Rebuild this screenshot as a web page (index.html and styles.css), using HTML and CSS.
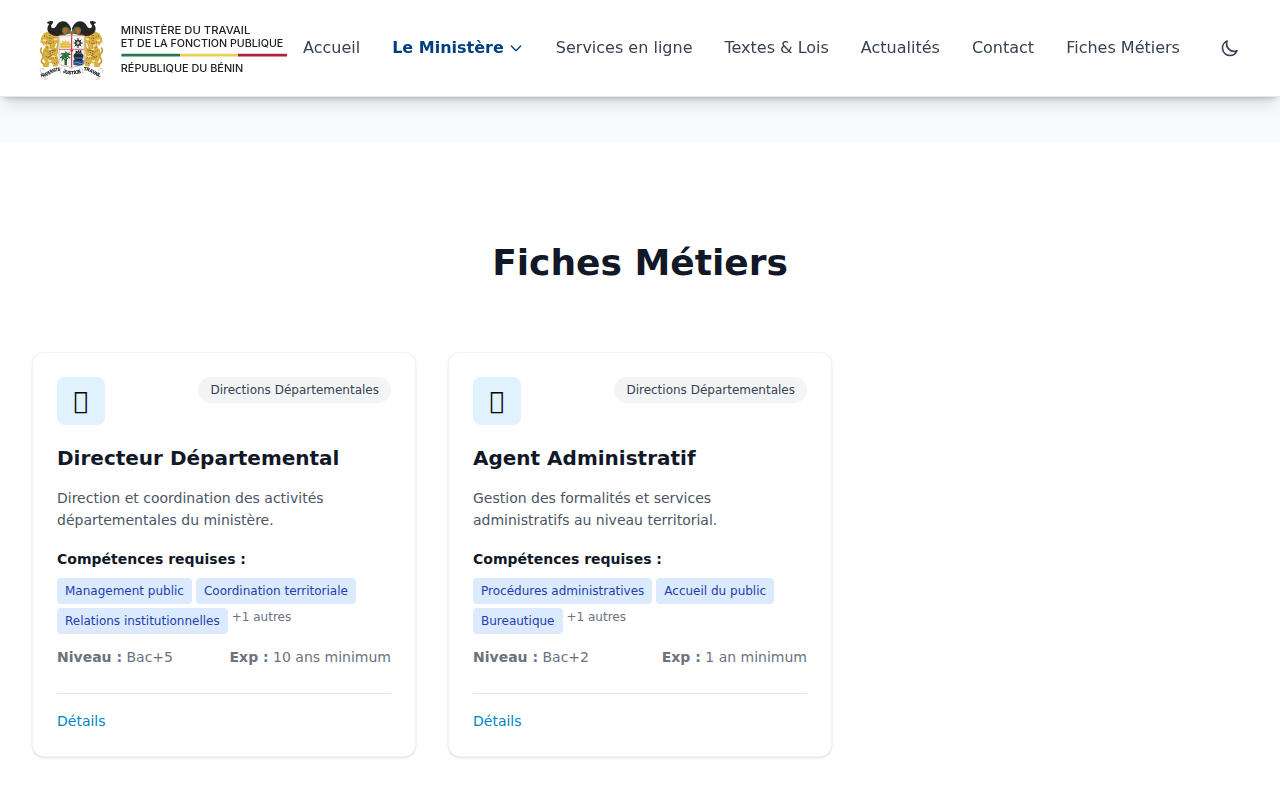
FILE: index.html
```html
<!DOCTYPE html>
<html lang="fr">
<head>
<meta charset="utf-8">
<title>Fiches Métiers</title>
<link rel="stylesheet" href="styles.css">
</head>
<body>
<header class="header">
  <a class="brand" href="#">
    <svg class="crest" viewBox="0 0 270 240" width="90" height="80" aria-hidden="true">
      <g id="lion">
        <path fill="#d9b044" d="M42 70l10-5 12 3 14 2 7 9 2 12-2 26-3 20 5 18-4 13-13 2-5-12-7 2-2 11-15 1-4-8 9-6-7-15-1-17 5-17-9-12-3 2 2-15z"/>
        <path fill="none" stroke="#c79b38" stroke-width="5" stroke-linecap="round" d="M42 162q-12-5-6-15 7-9 0-17-7-6-2-16"/>
        <path fill="none" stroke="#9a7129" stroke-width="3" d="M48 110l14 12 16-2M52 143l17-9 10 12"/>
        <path fill="none" stroke="#6d5422" stroke-width="3" stroke-dasharray="3 5" d="M42 77l18 9 13-3M48 95l13 7 12-7M46 121l14 9 15-6M48 139l15 8 13-5M72 162l9-5M60 75v60"/>
        <path stroke="#f6e5a8" stroke-width="5" d="M38 91h11M72 89l10-2M55 116l9 3M66 137l10 4M52 104l8 6M54 152l9 2"/>
        <path stroke="#fff" stroke-width="4" d="M46 103l-3 12M80 100l-4 14M60 160l9 6"/>
        <path stroke="#b83e36" stroke-width="4" d="M66 72l8 5"/>
      </g>
      <use href="#lion" transform="matrix(-1 0 0 1 249 0)"/>
      <path id="horn" fill="#262524" d="M50 38q8-7 18-4 4 3-1 7-6 5-3 11 4 6 12 0 5-11 13-16 11-5 21 1 9 7 13 18l-2 14q-10 6-22 5-8 6-24 3-18-4-22-15-3-12 5-20-5-1-8-4z"/>
      <use href="#horn" transform="matrix(-1 0 0 1 249 0)"/>
      <path fill="#5c7437" d="M98 54q10-8 20 1l4 16-21 1q-9-7-3-18zM151 54q-10-8-20 1l-4 16 21 1q9-7 3-18z"/>
      <path fill="#b8682f" d="M96 63l10-9 8 6-10 13zM153 63l-10-9-8 6 10 13z"/>
      <path fill="#bf3b30" d="M122 64h6v14h-6zM91 73h14v4H91zM145 73h15v4h-15z"/>
      <path fill="#f7f5ee" stroke="#a8a6a0" stroke-width="2" d="M87 77h76v83q-2 7-16 8-15 0-22 8-7-8-23-8-13-1-15-8z"/>
      <path fill="#e2b33d" d="M91 113V97l5 4 1-9 7 5 3-7 4 7 6-4 2 9 3-2v13z"/>
      <path fill="none" stroke="#f0d778" stroke-width="3" d="M94 106h26M98 99h18"/>
      <circle cx="144" cy="99" r="7" fill="#c6c1b4" stroke="#242629" stroke-width="4"/>
      <path stroke="#242629" stroke-width="3" d="M144 84v7M144 107v7M131 99h7M150 99h8M134 89l5 5M154 89l-5 5M134 109l5-5M154 109l-5-5"/>
      <path fill="#3e7a4d" d="M103 165l3-23-12 13 2-13-7 4 9-13-8-3 14-1 2-6 7 6 7-3-2 6 6 1-9 2 6 11-10-6 0 26z"/>
      <path fill="none" stroke="#285b39" stroke-width="3" d="M90 143q14-9 17 22 1-26 14-22M92 133q13-8 15 10 4-13 15-9"/>
      <path fill="#244e96" d="M130 150h31v13q-7 4-16 4l-15-3z"/>
      <path fill="#1e2937" d="M131 134l6-6v-6h4v5l4-8 4 8v-6h5v8l6 5v9l-5 9h-20l-4-10z"/>
      <path fill="none" stroke="#9baec7" stroke-width="2" d="M133 144h26M139 131l7-2 8 3M133 159q8-5 14 0t13-1"/>
      <path stroke="#b82e35" stroke-width="3" d="M125 78v94"/>
      <path fill="none" stroke="#b82e35" stroke-width="2" d="M87 118h76"/>
      <circle cx="125" cy="122" r="4" fill="#cf3037"/>
      <path fill="#fff" d="M32 190q17-2 30-11 15-10 27-8v12q-14 0-28 9-13 8-28 10zM94 174q30 13 62 0l3 13q-35 15-67 0zM163 171q15-2 28 8 13 9 28 11l-2 12q-15-2-28-10-13-9-27-9z"/>
      <g fill="none" stroke="#b5b1a8" stroke-width="2">
        <path d="M34 190q-8-10 0-15 8-2 9 8M48 204q-6-5-7 2 5 5 12-1M92 190q-5-14 5-17M157 190q5-14-5-17M215 190q8-10 0-15-8-2-9 8M201 204q6-5 7 2-5 5-12-1"/>
      </g>
      <defs>
        <path id="m1" d="M34 202q16-3 29-12 13-8 29-7"/>
        <path id="m2" d="M98 187q28 11 58 0"/>
        <path id="m3" d="M161 181q16 1 27 9 13 9 29 12"/>
      </defs>
      <g class="motto">
        <text><textPath href="#m1" textLength="60" lengthAdjust="spacingAndGlyphs">FRATERNITE</textPath></text>
        <text><textPath href="#m2" textLength="57" lengthAdjust="spacingAndGlyphs">JUSTICE</textPath></text>
        <text><textPath href="#m3" textLength="54" lengthAdjust="spacingAndGlyphs">TRAVAIL</textPath></text>
      </g>
    </svg>
    <svg class="wordmark" viewBox="120 10 170 80" width="170" height="80">
      <text x="120.8" y="34" textLength="129.5" lengthAdjust="spacingAndGlyphs">MINISTÈRE DU TRAVAIL</text>
      <text x="120.8" y="46.6" textLength="162.5" lengthAdjust="spacingAndGlyphs">ET DE LA FONCTION PUBLIQUE</text>
      <path fill="#26764e" d="M121.4 53.8H180v2.8h-58.6z"/>
      <path fill="#ebce54" d="M180 53.8h58v2.8h-58z"/>
      <path fill="#ab2437" d="M238 53.8h49v2.8h-49z"/>
      <text x="120.8" y="72.2" textLength="122.5" lengthAdjust="spacingAndGlyphs">RÉPUBLIQUE DU BÉNIN</text>
    </svg>
  </a>
  <nav class="nav">
    <a href="#">Accueil</a>
    <a class="active" href="#">Le Ministère
      <svg width="16" height="16" viewBox="0 0 24 24" fill="none" stroke="currentColor" stroke-width="2" stroke-linecap="round" stroke-linejoin="round"><path d="M19 9l-7 7-7-7"/></svg>
    </a>
    <a href="#">Services en ligne</a>
    <a href="#">Textes &amp; Lois</a>
    <a href="#">Actualités</a>
    <a href="#">Contact</a>
    <a href="#">Fiches Métiers</a>
  </nav>
  <button class="theme" aria-label="Mode sombre">
    <svg width="20" height="20" viewBox="0 0 24 24" fill="none" stroke="currentColor" stroke-width="2" stroke-linecap="round" stroke-linejoin="round"><path d="M20.354 15.354A9 9 0 018.646 3.646 9.003 9.003 0 0012 21a9.003 9.003 0 008.354-5.646z"/></svg>
  </button>
</header>
<div class="band"></div>
<main class="main">
  <h1>Fiches Métiers</h1>
  <div class="grid">
    <article class="card">
      <div class="top"><div class="icon">&#xF0B1;</div><span class="badge">Directions Départementales</span></div>
      <h2>Directeur Départemental</h2>
      <p class="desc">Direction et coordination des activités départementales du ministère.</p>
      <h3>Compétences requises :</h3>
      <div class="tags"><span class="tag">Management public</span><span class="tag">Coordination territoriale</span><span class="tag">Relations institutionnelles</span><span class="more">+1 autres</span></div>
      <div class="facts"><span><b>Niveau :</b> Bac+5</span><span><b>Exp :</b> 10 ans minimum</span></div>
      <div class="foot"><a href="#">Détails</a></div>
    </article>
    <article class="card">
      <div class="top"><div class="icon">&#xF0B1;</div><span class="badge">Directions Départementales</span></div>
      <h2>Agent Administratif</h2>
      <p class="desc">Gestion des formalités et services administratifs au niveau territorial.</p>
      <h3>Compétences requises :</h3>
      <div class="tags"><span class="tag">Procédures administratives</span><span class="tag">Accueil du public</span><span class="tag">Bureautique</span><span class="more">+1 autres</span></div>
      <div class="facts"><span><b>Niveau :</b> Bac+2</span><span><b>Exp :</b> 1 an minimum</span></div>
      <div class="foot"><a href="#">Détails</a></div>
    </article>
  </div>
</main>
</body>
</html>
```
FILE: styles.css
```css
* { box-sizing: border-box; margin: 0; padding: 0; }
html, body { height: 100%; overflow: hidden; }
body { font-family: "DejaVu Sans", sans-serif; font-size: 16px; line-height: 24px; color: #111827; background: #fff; }
a { color: inherit; text-decoration: none; }

.header {
  position: relative; z-index: 2; display: flex; align-items: center;
  height: 97px; padding: 0 40px 0 30px; background: #fff;
  border-bottom: 1px solid #e5e7eb; will-change: transform;
  box-shadow: 0 4px 6px -4px rgba(0,0,0,.3), 0 10px 15px -3px rgba(0,0,0,.13);
}
.brand { display: flex; width: 273px; padding-top: 4px; }
.crest, .wordmark { display: block; flex: none; }
.wordmark text { font: 500 9.8px "Inter", sans-serif; fill: #202020; }
.motto text { font: bold 14px "Liberation Sans", sans-serif; fill: #111; stroke: #111; stroke-width: .6px; }
.nav { display: flex; gap: 32px; color: #374151; white-space: nowrap; }
.nav a { display: flex; align-items: center; }
.nav .active { color: #003f7f; font-weight: 700; gap: 4px; }
.theme { margin-left: auto; display: flex; border: 0; background: none; color: #374151; }

.band { height: 45px; background: #f8fafc; }
.main { padding: 96px 32px 0; }
h1 { font-size: 36px; line-height: 50px; text-align: center; margin-bottom: 64px; }
.grid { display: grid; grid-template-columns: repeat(3, 1fr); gap: 32px; }
.card {
  height: 405px; padding: 24px; border: 1px solid #f3f4f6; border-radius: 12px; background: #fff;
  box-shadow: 0 1px 3px rgba(0,0,0,.1), 0 1px 2px -1px rgba(0,0,0,.1);
}
.top { display: flex; justify-content: space-between; align-items: flex-start; margin-bottom: 16px; }
.icon { width: 48px; height: 48px; border-radius: 8px; background: #e0f2fe; display: flex; align-items: center; justify-content: center; font-size: 24px; line-height: 32px; color: #000; }
.badge { padding: 4px 12px; border-radius: 13px; background: #f3f4f6; color: #374151; font-size: 12px; line-height: 18px; }
h2 { font-size: 20px; line-height: 34px; margin-bottom: 12px; }
.desc { font-size: 14px; line-height: 22px; color: #4b5563; margin-bottom: 17px; }
h3 { font-size: 14px; line-height: 22px; margin-bottom: 8px; }
.tags { display: flex; flex-wrap: wrap; gap: 4px; margin-bottom: 12px; }
.tag { padding: 4px 8px; border-radius: 4px; background: #dbeafe; color: #1e40af; font-size: 12px; line-height: 18px; }
.more { color: #6b7280; font-size: 12px; line-height: 18px; }
.facts { display: flex; justify-content: space-between; color: #6b7280; font-size: 14px; line-height: 22px; margin-bottom: 25px; }
.foot { padding-top: 16px; border-top: 1px solid #e5e7eb; color: #0284c7; font-size: 14px; line-height: 22px; }
```
